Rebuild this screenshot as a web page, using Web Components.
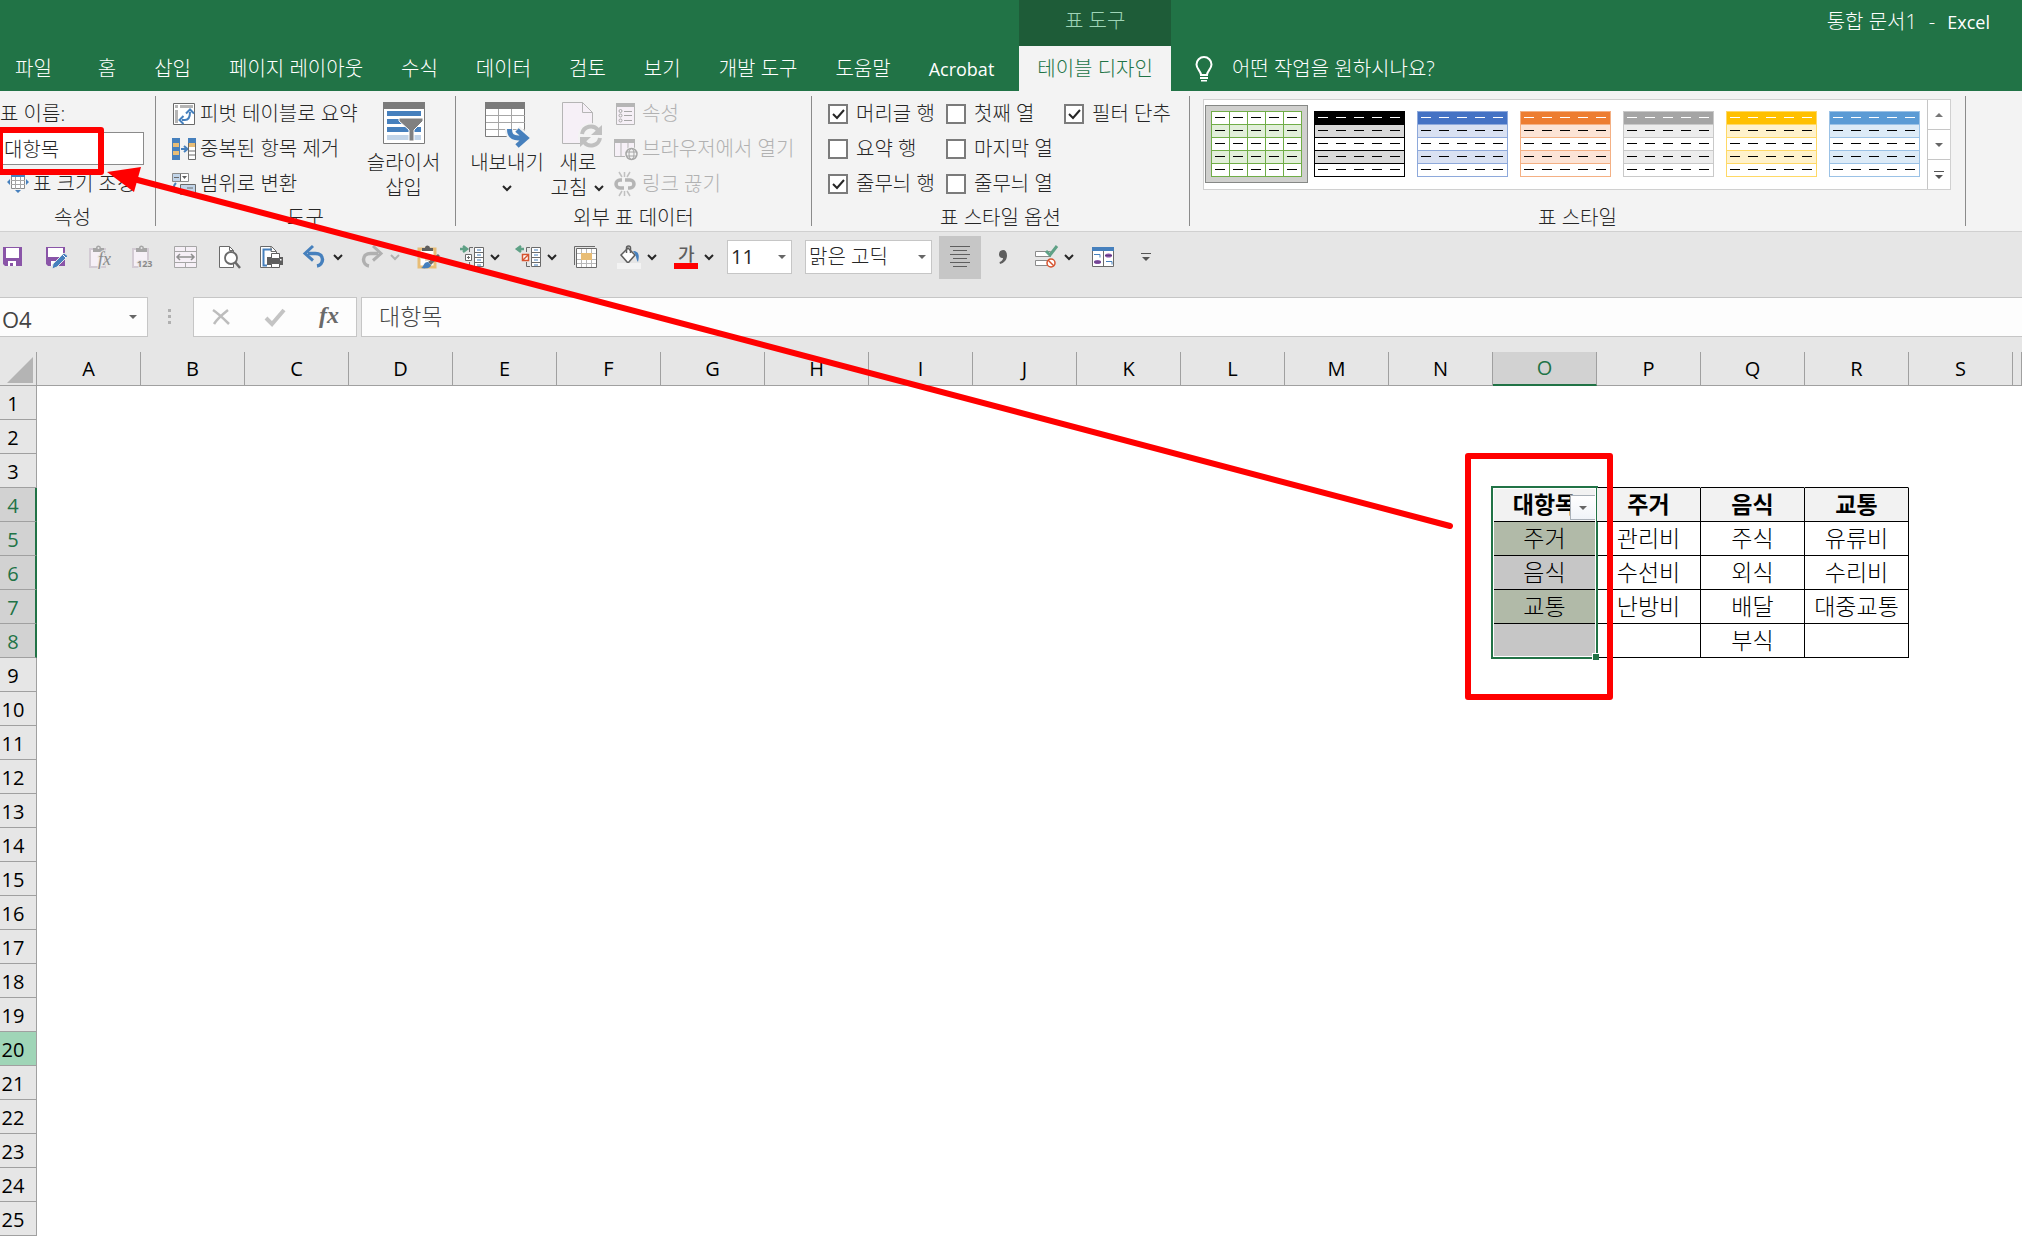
<!DOCTYPE html>
<html lang="ko">
<head>
<meta charset="utf-8">
<title>통합 문서1 - Excel</title>
<style>
  body { margin: 0; background: #fff; overflow: hidden; }
</style>
</head>
<body>
<excel-window></excel-window>

<script>
const FONT = '"Open Sans", "Noto Sans CJK KR", sans-serif';
const BASE = `
  *, *::before, *::after { box-sizing: border-box; }
  button, input, select { font: inherit; color: inherit; margin: 0; padding: 0; border: 0; background: none; border-radius: 0; outline: 0; }
  a { color: inherit; text-decoration: none; }
`;
function define(name, render) {
  customElements.define(name, class extends HTMLElement {
    constructor() { super(); this.attachShadow({ mode: 'open' }); }
    connectedCallback() {
      const t = document.createElement('template');
      t.innerHTML = render(this);
      this.shadowRoot.replaceChildren(t.content.cloneNode(true));
    }
  });
}

/* ---------- icons: [width, height, drawing] ---------- */
const clip = `<path d="M3 4h15v18H3z" fill="#f6f0f7" stroke="#d3cbd4" stroke-width="2"/><path d="M6 3h3a2.500 2.500 0 0 1 5 0h3v4H6z" fill="#a6a6a6"/><circle cx="11.500" cy="3" r="1" fill="#e6e6e6"/>`;
const ICONS = {
  chevron: [12, 8, `<path d="M2 2l4 4 4-4" fill="none" stroke="#262626" stroke-width="2"/>`],
  chevronOff: [12, 8, `<path d="M2 2l4 4 4-4" fill="none" stroke="#b1b1b1" stroke-width="2"/>`],
  down: [8, 4, `<path d="M0 0h8L4 4z" fill="#666"/>`],
  up: [8, 4, `<path d="M0 4h8L4 0z" fill="#777"/>`],
  more: [10, 8, `<path d="M0 0h10v1H0z M1 4h8L5 8z" fill="#555"/>`],
  bulb: [18, 26, `<path d="M6 19c0-4-4.500-6-4.500-10.500a7.500 7.500 0 0 1 15 0C16.500 13 12 15 12 19z" fill="none" stroke="#fff" stroke-width="2"/><path d="M5 21h8v2H5zM6 24h6v1.500H6z" fill="#fff"/>`],
  save: [25, 24, `<path d="M2 2h19v19H4l-2-2z" fill="#8a55a8"/><path d="M5 3h13v10H5z" fill="#fff"/><path d="M7 16h8v5H7z" fill="#fff"/><path d="M9 18h3v3H9z" fill="#8a55a8"/>`],
  saveEdit: [25, 24, `<path d="M2 2h19v19H4l-2-2z" fill="#8a55a8"/><path d="M4 3h15v9H4z" fill="#fff"/><path d="M7 16h5v5H7z" fill="#fff"/><path d="M20 8l4 3-11 11-5 2 1-5z" fill="#4680bd" stroke="#e6e6e6"/><path d="M19 10l3 3" stroke="#fff"/>`],
  pasteFx: [25, 24, `${clip}<text x="11" y="20" font-family="Liberation Serif" font-style="italic" font-weight="400" font-size="18" fill="#8b8b8b" stroke="#e6e6e6" stroke-width="2" paint-order="stroke">fx</text>`],
  pasteNum: [25, 24, `${clip}<text x="7" y="22" font-family="Open Sans" font-weight="700" font-size="9" fill="#8b8b8b" stroke="#e6e6e6" stroke-width="2" paint-order="stroke">123</text>`],
  merge: [25, 24, `<path d="M1.500 1.500h22v21h-22zM1.500 6.500h22M1.500 17.500h22M12.500 1.500v5M12.500 17.500v5" fill="#f6f0f7" stroke="#a6a6a6"/><path d="M4 12h17M7 9l-3 3 3 3M18 9l3 3-3 3" fill="none" stroke="#909090" stroke-width="1.500"/>`],
  preview: [25, 24, `<path d="M3.500 1.500h10l4 4v17h-14z" fill="#fff" stroke="#6a6a6a"/><path d="M13.500 1.500v4h4" fill="none" stroke="#6a6a6a"/><circle cx="15" cy="13" r="6" fill="#fff" stroke="#6a6a6a" stroke-width="1.800"/><path d="M19 17l5 6" stroke="#6a6a6a" stroke-width="2.500"/>`],
  print: [25, 24, `<path d="M1.500 1.500h11l5 5v16h-16z" fill="#fff" stroke="#6a6a6a"/><path d="M13 4.500H4.500v16H8" fill="none" stroke="#4680bd" stroke-width="2"/><path d="M12 1.500v5h5" fill="none" stroke="#6a6a6a"/><path d="M8 12h16v8H8z" fill="#5e5e5e"/><path d="M12.500 8.500h8v5h-8zM12.500 18.500h8v4h-8z" fill="#fff" stroke="#5e5e5e"/><path d="M21 14h1.500v1.500H21z" fill="#fff"/>`],
  undo: [24, 24, `<path d="M5 8.500h7.500c4 0 7 2.500 7 6s-2.500 6-5.500 6.500" fill="none" stroke="#4680bd" stroke-width="3.500"/><path d="M10 1L2 8.500l8 7" fill="none" stroke="#4680bd" stroke-width="3"/>`],
  redo: [24, 24, `<path d="M18 8.500h-7.500c-4 0-7 2.500-7 6s2.500 6 5.500 6.500" fill="none" stroke="#b0b0b0" stroke-width="3.500"/><path d="M13 1l8 7.500-8 7" fill="none" stroke="#b0b0b0" stroke-width="3"/>`],
  brush: [25, 24, `<path d="M3 4h16v18H3z" fill="#fff" stroke="#e8bd76" stroke-width="3"/><path d="M6 6V3h3a2.500 2.500 0 0 1 5 0h3v3z" fill="#5e5e5e"/><path d="M5 9h3v2h3V9h3v2h2v3h-3v2H9v-2H5z" fill="#e6d9c3"/><path d="M22 9l2 2-9 9-3-3z" fill="#6a6a6a"/><path d="M5 23c3-1 2-6 7-6l3 3c0 3-5 4-10 3z" fill="#4680bd"/>`],
  insertRow: [25, 24, `<path d="M0 4h6M3 1l4 3-4 3" fill="none" stroke="#5fa186" stroke-width="2.500"/><path d="M13 2.500H9.500V7M9.500 17v4.500H13" fill="none" stroke="#6a6a6a"/><path d="M5.500 9.500h6v6h-6z" fill="#fff" stroke="#6a6a6a"/><path d="M7 12.500h3M8.500 11v3" stroke="#6a6a6a"/><path d="M14.500 2.500h9v19h-9zM14.500 7.500h9M14.500 12.500h9M14.500 17.500h9" fill="#fff" stroke="#6a6a6a"/><path d="M17 5h4M17 10h4M17 15h4M17 20h4" stroke="#4680bd"/>`],
  deleteRow: [25, 24, `<path d="M7 4H1M4 1L0 4l4 3" fill="none" stroke="#5fa186" stroke-width="2.500"/><path d="M13 2.500H9.500V7M9.500 17v4.500H13" fill="none" stroke="#6a6a6a"/><path d="M5.500 9.500h6v6h-6z" fill="#fff" stroke="#d6532f" stroke-width="1.500"/><path d="M6 15l5-5" stroke="#d6532f" stroke-width="1.500"/><path d="M14.500 2.500h9v19h-9zM14.500 7.500h9M14.500 12.500h9M14.500 17.500h9" fill="#fff" stroke="#6a6a6a"/><path d="M17 5h4M17 10h4M17 15h4M17 20h4" stroke="#4680bd"/>`],
  pivotSel: [25, 24, `<path d="M1.500 20V1.500H22" fill="none" stroke="#6a6a6a"/><path d="M3.500 3.500h20v19h-20z" fill="#fff" stroke="#6a6a6a"/><path d="M4 8.500h19M4 14.500h19M4 18.500h19M8.500 4v18M18.500 4v18M13.500 4v18" stroke="#b8b8b8"/><path d="M8 8h11v7H8z" fill="#e8bd76"/>`],
  fill: [25, 24, `<path d="M4 10l7-7 7 7-7 8z" fill="#fff" stroke="#5e5e5e" stroke-width="1.500"/><path d="M9.500 8V3a2 2 0 0 1 4 0v5" fill="none" stroke="#5e5e5e" stroke-width="1.500"/><path d="M16 6c5 0 7 3 5 11-2-2-1-6-5-11z" fill="#4680bd"/><path d="M0 18h24v6H0z" fill="#f3f3f3"/>`],
  fontColor: [25, 24, `<text x="4" y="16" font-family="Noto Sans CJK KR" font-weight="500" font-size="18" fill="#5e5e5e">가</text><path d="M0 18h24v6H0z" fill="#f00"/>`],
  center: [20, 24, `<path d="M0 1.500h20M3 5.500h14M0 9.500h20M3 13.500h14M0 17.500h20M3 21.500h14" stroke="#5e5e5e"/>`],
  comma: [10, 14, `<path d="M5 0a4.500 4.500 0 0 0-4 4.500C1 7 3 8.500 5 8c0 2-1.500 3.500-3.500 4L2 14c4-1 7-4 7-8.500C9 2 7.500 0 5 0z" fill="#5e5e5e"/>`],
  validate: [25, 24, `<path d="M1.500 6.500h15v5h-15zM1.500 15.500h13v5h-13z" fill="#fff" stroke="#8b8b8b"/><path d="M12 6l4 4 7-9" fill="none" stroke="#5fa186" stroke-width="3"/><circle cx="17" cy="18" r="4" fill="#fff" stroke="#d6532f" stroke-width="1.500"/><path d="M14 15l6 6" stroke="#d6532f" stroke-width="1.500"/>`],
  compare: [25, 24, `<path d="M2.500 4h21v17.500h-21z" fill="#fff" stroke="#6a6a6a"/><path d="M2 2h22v4H2z" fill="#4680bd"/><path d="M13.500 6v15" stroke="#6a6a6a"/><path d="M4 9.500h6v3M16 16.500h6v3" fill="none" stroke="#4680bd"/><ellipse cx="18.500" cy="10.500" rx="3.500" ry="2" fill="#8a55a8"/><ellipse cx="7.500" cy="17" rx="3.500" ry="2" fill="#8a55a8"/><path d="M15 10.500h7M4 17h7" stroke="#5d3a80"/>`],
  resize: [22, 20, `<path d="M4.500 1.500h13v13h-13z" fill="#fff" stroke="#8b8b8b"/><path d="M4 6.500h14M4 10.500h14M8.500 2v13M13.500 2v13" stroke="#a6a6a6"/><path d="M4 0h14v3H4z" fill="#4680bd"/><path d="M3 5v6L0 8zM19 5v6l3-3zM8 16h6l-3 3z" fill="#4680bd"/>`],
  pivot: [24, 24, `<path d="M1.500 1.500h21v21h-21z" fill="#fff" stroke="#6a6a6a"/><path d="M3 3h3v3H3zM8 3h13v3H8zM3 8h3v13H3z" fill="#b5b5b5"/><path d="M10 18h3c4 0 5-3 5-8" fill="none" stroke="#4680bd" stroke-width="2"/><path d="M11.500 14l-4 4 4 4M14 11.500l4-4 4 4" fill="none" stroke="#4680bd" stroke-width="2"/>`],
  dedupe: [24, 24, `<path d="M0 1h8v22H0z" fill="#4680bd"/><path d="M1 6h6v4H1zM1 14h6v4H1z" fill="#e8bd76"/><path d="M9 12h6M12 9l3.500 3L12 15" fill="none" stroke="#4680bd" stroke-width="2"/><path d="M16.500 1.500h7v21h-7zM16.500 14h7M16.500 18h7" fill="#fff" stroke="#6a6a6a"/><path d="M16 1h8v5h-8z" fill="#4680bd"/><path d="M17 6h6v4h-6z" fill="#e8bd76"/>`],
  toRange: [24, 24, `<path d="M.5 1.500h16v8H.5z" fill="#fff" stroke="#8b8b8b"/><path d="M1 2h8v7H1z" fill="#c1d4e8"/><path d="M2 5.500h5M8.500 2v7" stroke="#6a6a6a"/><path d="M10 4h5l-2.500 3z" fill="#5e5e5e"/><path d="M8.500 12.500h15v10h-15z" fill="#c1d4e8" stroke="#6a6a6a"/><path d="M15 16h6" stroke="#6a6a6a"/><path d="M4 11c-4 4-2 8 5 9" fill="none" stroke="#4680bd" stroke-width="2"/>`],
  slicer: [42, 44, `<path d="M.5.500h41v41H.5z" fill="#fff" stroke="#7b7b7b"/><path d="M0 0h42v7H0z" fill="#7b7b7b"/><path d="M4 9h34v5H4zM4 17h34v5H4zM4 25h34v5H4z" fill="#4680bd"/><path d="M4 33h34v5H4z" fill="#c1d4e8"/><path d="M16 16h24v3l-9 9v11h-5V28l-10-9z" fill="#808080" stroke="#fff"/>`],
  exportTable: [44, 46, `<path d="M.5.500h39v34H.5z" fill="#fff" stroke="#7b7b7b"/><path d="M1 13.500h39M1 20.500h39M1 27.500h39M13.500 6v28M26.500 6v28" stroke="#a6a6a6"/><path d="M0 0h40v7H0z" fill="#7b7b7b"/><path d="M24 27c0 6 2 9 9 9h7M32 27l10 9-10 8" fill="none" stroke="#f3f3f3" stroke-width="8"/><path d="M24.500 27c0 6 2 9 9 9h7M32 28l9 8-9 8" fill="none" stroke="#4680bd" stroke-width="5"/>`],
  refresh: [50, 46, `<g transform="translate(9 0)"><path d="M.5.500h20l10 10v31H.5z" fill="#f6f0f7" stroke="#b5b5b5"/><path d="M20.500.500v10h10" fill="none" stroke="#b5b5b5"/><circle cx="29" cy="34" r="13" fill="#f3f3f3"/><path d="M20 32a9 9 0 0 1 16-4M38 36a9 9 0 0 1-16 4" fill="none" stroke="#c0c0c0" stroke-width="4"/><path d="M40 23v10H29zM18 45V35h11z" fill="#c0c0c0"/></g>`],
  props: [24, 24, `<path d="M2.500 1.500h18v21h-18z" fill="#f6f0f7" stroke="#b5b5b5"/><path d="M2 1h19v4H2z" fill="#b5b5b5"/><path d="M10 9.500h8M10 13.500h8M10 18.500h8" stroke="#a6a6a6"/><circle cx="6.500" cy="9" r="1.500" fill="none" stroke="#a6a6a6"/><circle cx="6.500" cy="13.500" r="1.500" fill="none" stroke="#a6a6a6"/><circle cx="6.500" cy="18.500" r="1.500" fill="none" stroke="#a6a6a6"/>`],
  browser: [24, 24, `<path d="M.5 2.500h20v17H.5zM7 3v16M14 3v16" fill="#f6f0f7" stroke="#b5b5b5"/><path d="M0 2h21v4H0z" fill="#b5b5b5"/><circle cx="17.500" cy="17" r="7" fill="#f3f3f3"/><circle cx="17.500" cy="17" r="5.500" fill="none" stroke="#a6a6a6" stroke-width="1.500"/><ellipse cx="17.500" cy="17" rx="2.500" ry="5.500" fill="none" stroke="#a6a6a6"/><path d="M12 15h11M12 19h11" stroke="#a6a6a6"/>`],
  unlink: [24, 24, `<path d="M8 8H6a4 4 0 0 0 0 8h4M11 8h5a4 4 0 0 1 0 8h-2" fill="none" stroke="#b5b5b5" stroke-width="3.500"/><path d="M5 0l3 5M10.500 0v5M16 0l-3 5M5 24l3-5M10.500 24v-5M16 24l-3-5" stroke="#c0c0c0" stroke-width="1.500"/><path d="M8 6h3v4H8zM11 14h3v4h-3z" fill="#f3f3f3"/>`],
  cancel: [18, 16, `<path d="M1 1c6 4 11 9 16 14M16 1C11 5 5 10 2 15" fill="none" stroke="#bdbdbd" stroke-width="2.500"/>`],
  enter: [20, 16, `<path d="M1 9l6 6L19 1" fill="none" stroke="#c4c4c4" stroke-width="4"/>`],
  fx: [22, 26, `<text x="1" y="19" font-family="Liberation Serif" font-style="italic" font-weight="700" font-size="24" fill="#6a6a6a">fx</text>`],
  dots: [4, 16, `<path d="M0 0h3v3H0zM0 6h3v3H0zM0 12h3v3H0z" fill="#b0b0b0"/>`],
  tick: [20, 20, `<path d="M5 10l4 4 7-8" fill="none" stroke="#262626" stroke-width="2"/>`],
  corner: [26, 26, `<path d="M26 0v26H0z" fill="#b4b4b4"/>`],
};
define('xl-icon', el => {
  const [w, h, body] = ICONS[el.getAttribute('name')];
  return `<style>:host{display:block;flex:none;width:${w}px;height:${h}px}svg{display:block;overflow:visible}</style>
    <svg width="${w}" height="${h}" viewBox="0 0 ${w} ${h}" aria-hidden="true">${body}</svg>`;
});

/* ---------- title bar and tabs ---------- */
define('title-bar', () => `<style>${BASE}
  :host{display:flex;height:91px;background:#217346;color:#fff;line-height:28px}
  nav{display:flex;align-items:flex-end;flex:none}
  a{display:block;height:45px;padding:9px 19px 0;white-space:nowrap}
  a.file{padding:9px 27px 0 15px}
  .latin{font-size:18px;font-weight:400}
  a.latin{padding-right:25px}
  .context{display:flex;flex-direction:column;text-align:center}
  .context span{height:46px;background:#1e5c38;color:#9fd5b7;padding-top:7px}
  .context a{background:#f3f3f3;color:#217346;padding:9px 18px 0}
  .ask{display:flex;align-items:center;gap:19px;height:45px;margin:0 0 0 24px;white-space:nowrap}
  .title{display:flex;gap:12px;margin-left:auto;padding:8px 32px 0 0;white-space:nowrap}
</style>
<nav>
  ${['파일','홈','삽입','페이지 레이아웃','수식','데이터','검토','보기','개발 도구','도움말'].map((t, i) => `<a href="#"${i ? '' : ' class="file"'}>${t}</a>`).join('')}
  <a href="#" class="latin">Acrobat</a>
  <div class="context"><span>표 도구</span><a href="#">테이블 디자인</a></div>
  <button class="ask"><xl-icon name="bulb"></xl-icon>어떤 작업을 원하시나요?</button>
</nav>
<div class="title"><span>통합 문서1</span><span>-</span><span class="latin">Excel</span></div>`);

/* ---------- ribbon parts ---------- */
define('ribbon-group', el => `<style>${BASE}
  :host{display:flex;flex:none;flex-direction:column;justify-content:space-between;padding-top:5px;height:140px}
  .body{display:flex;height:105px;padding-left:var(--lead,0)}
  .label{line-height:26px;text-align:center;padding-right:var(--trail,0)}
</style><div class="body"><slot></slot></div><div class="label">${el.getAttribute('label')}</div>`);

define('large-button', el => `<style>${BASE}
  :host{display:block}
  button{display:flex;flex-direction:column;align-items:center;width:100%;padding-top:6px;line-height:25px;white-space:nowrap}
  .icon{height:48px}
  .line{display:flex;align-items:center;gap:6px;height:25px}
</style><button><span class="icon"><xl-icon name="${el.getAttribute('icon')}"></xl-icon></span><slot></slot>
<span class="line">${el.getAttribute('second') || ''}${el.hasAttribute('menu') ? '<xl-icon name="chevron"></xl-icon>' : ''}</span></button>`);

define('small-button', el => `<style>${BASE}
  :host{display:block}
  button{display:flex;align-items:center;gap:4px;height:35px;white-space:nowrap}
  button:disabled{color:#b1b1b1}
</style><button${el.hasAttribute('disabled') ? ' disabled' : ''}><xl-icon name="${el.getAttribute('icon')}"></xl-icon><slot></slot></button>`);

define('check-option', el => `<style>${BASE}
  :host{display:block}
  label{display:flex;align-items:center;gap:8px;height:35px;white-space:nowrap}
  .box{display:grid}
  .box>*{grid-area:1/1}
  input{appearance:none;width:20px;height:20px;border:2px solid #7b7b7b;background:#fff}
  xl-icon{visibility:hidden;pointer-events:none}
  input:checked+xl-icon{visibility:visible}
</style><label><span class="box"><input type="checkbox"${el.hasAttribute('checked') ? ' checked' : ''}><xl-icon name="tick"></xl-icon></span><span>${el.getAttribute('label')}</span></label>`);

define('style-thumb', el => {
  const [head, line, band, dash] = el.getAttribute('colors').split(' ');
  const grid = el.hasAttribute('grid');
  let s = `<rect x=".5" y=".5" width="90" height="65" fill="#fff" stroke="${line}"/>`;
  s += `<path d="M1 1h89v12H1z" fill="${head}"/><path d="M1 14h89v12H1zM1 40h89v12H1z" fill="${band}"/>`;
  s += `<path d="M0 13.500h91M0 26.500h91M0 39.500h91M0 52.500h91" stroke="${line}"/>`;
  if (grid) s += `<path d="M18.500 0v66M36.500 0v66M54.500 0v66M72.500 0v66" stroke="${line}"/>`;
  for (let r = 0; r < 5; r++) for (let c = 0; c < 5; c++)
    s += `<path d="M${4 + c * 18} ${6.5 + r * 13}h10" stroke="${r ? '#000' : dash}"/>`;
  return `<style>${BASE}:host{display:block}button{display:block;width:103px;height:78px;padding:5px;border:1px solid transparent}
    :host([selected]) button{background:#d0d0ce;border-color:#868886}svg{display:block}</style>
    <button aria-label="${el.getAttribute('name')}"><svg width="91" height="66">${s}</svg></button>`;
});

define('table-ribbon', () => `<style>${BASE}
  :host{display:flex;height:141px;background:#f3f3f3;border-bottom:1px solid #d0d0d0;color:#262626;line-height:28px}
  .sep{flex:none;width:1px;margin:5px 0;background:#8b8b8b}
  .g1{width:155px;--trail:10px}
  .g2{width:299px;--lead:16px}
  .g3{width:355px;--lead:11px}
  .g4{width:377px;--lead:16px}
  .g5{width:775px;--lead:13px}
  .g1 label{display:block;height:35px;line-height:35px}
  .g1 input{display:block;width:144px;height:33px;margin:1px 0;padding-left:4px;background:#fff;border:1px solid #8b8b8b;border-left:0}
  .g1 small-button{padding-left:7px}
  .slicer{width:80px;margin-left:6px}
  .export{width:80px}
  .refresh{width:62px;margin-right:5px}
  .options{display:grid;grid-template-columns:repeat(3,118px);grid-auto-rows:35px}
  .gallery{display:flex;height:91px;margin-top:3px;background:#fff;border:1px solid #d0d0d0}
  .thumbs{display:flex;width:723px;padding:5px 1px}
  .scroll{display:flex;flex-direction:column;width:23px;border-left:1px solid #c6c6c6}
  .scroll button{flex:1;display:grid;place-items:center}
  .scroll button+button{border-top:1px solid #c6c6c6}
</style>
<ribbon-group class="g1" label="속성"><div>
  <label for="tname">표 이름:</label><input id="tname" value="대항목">
  <small-button icon="resize">표 크기 조정</small-button></div></ribbon-group>
<span class="sep"></span>
<ribbon-group class="g2" label="도구"><div>
  <small-button icon="pivot">피벗 테이블로 요약</small-button>
  <small-button icon="dedupe">중복된 항목 제거</small-button>
  <small-button icon="toRange">범위로 변환</small-button></div>
  <large-button class="slicer" icon="slicer" second="삽입">슬라이서</large-button></ribbon-group>
<span class="sep"></span>
<ribbon-group class="g3" label="외부 표 데이터">
  <large-button class="export" icon="exportTable" menu>내보내기</large-button>
  <large-button class="refresh" icon="refresh" second="고침" menu>새로</large-button>
  <div><small-button icon="props" disabled>속성</small-button>
  <small-button icon="browser" disabled>브라우저에서 열기</small-button>
  <small-button icon="unlink" disabled>링크 끊기</small-button></div></ribbon-group>
<span class="sep"></span>
<ribbon-group class="g4" label="표 스타일 옵션"><div class="options">
  <check-option checked label="머리글 행"></check-option><check-option label="첫째 열"></check-option><check-option checked label="필터 단추"></check-option>
  <check-option label="요약 행"></check-option><check-option label="마지막 열"></check-option><span></span>
  <check-option checked label="줄무늬 행"></check-option><check-option label="줄무늬 열"></check-option></div></ribbon-group>
<span class="sep"></span>
<ribbon-group class="g5" label="표 스타일"><div class="gallery"><div class="thumbs">
  <style-thumb selected grid name="녹색" colors="#ffffff #70ad47 #e2efda #000000"></style-thumb>
  <style-thumb name="검정" colors="#000000 #000000 #d9d9d9 #ffffff"></style-thumb>
  <style-thumb name="파랑" colors="#4472c4 #8ea9db #d9e1f2 #ffffff"></style-thumb>
  <style-thumb name="주황" colors="#ed7d31 #f4b084 #fce4d6 #ffffff"></style-thumb>
  <style-thumb name="회색" colors="#a5a5a5 #c9c9c9 #ededed #ffffff"></style-thumb>
  <style-thumb name="황금색" colors="#ffc000 #ffd966 #fff2cc #ffffff"></style-thumb>
  <style-thumb name="하늘색" colors="#5b9bd5 #9bc2e6 #ddebf7 #ffffff"></style-thumb></div>
  <div class="scroll"><button aria-label="위로"><xl-icon name="up"></xl-icon></button><button aria-label="아래로"><xl-icon name="down"></xl-icon></button><button aria-label="자세히"><xl-icon name="more"></xl-icon></button></div>
</div></ribbon-group>
<span class="sep"></span>`);

/* ---------- quick access toolbar ---------- */
define('quick-button', el => `<style>${BASE}
  :host{display:block;flex:none}
  button{display:grid;place-items:center;width:43px;height:43px}
  :host([pressed]) button{background:#c6c6c6;width:42px}
</style><button aria-label="${el.getAttribute('icon')}"><xl-icon name="${el.getAttribute('icon')}"></xl-icon></button>`);

define('split-button', el => `<style>${BASE}
  :host{display:flex;flex:none;width:57px;height:43px;padding-left:10px}
  button{display:flex;align-items:center}
  button+button{padding-left:4px}
  .main{width:25px}
</style><button class="main" aria-label="${el.getAttribute('icon')}"><xl-icon name="${el.getAttribute('icon')}"></xl-icon></button>
<button aria-label="${el.getAttribute('icon')} 메뉴"><xl-icon name="${el.hasAttribute('off') ? 'chevronOff' : 'chevron'}"></xl-icon></button>`);

define('combo-box', el => `<style>${BASE}
  :host{display:grid;flex:none;height:34px}
  :host>*{grid-area:1/1}
  select,xl-icon{grid-area:1/1}
  select{appearance:none;width:100%;height:34px;padding:0 3px;background:#fff;border:1px solid #c6c6c6;color:#262626}
  xl-icon{place-self:center end;margin-right:6px;pointer-events:none}
</style><select aria-label="${el.getAttribute('label')}"><option>${el.getAttribute('value')}</option></select><xl-icon name="down"></xl-icon>`);

define('quick-bar', () => `<style>${BASE}
  :host{display:flex;align-items:center;height:50px;margin-left:-8px}
  .size{width:65px;margin:0 13px 0 6px;font-weight:400}
  .face{width:127px;margin-right:7px}
</style>
${['save','saveEdit','pasteFx','pasteNum','merge','preview','print'].map(n => `<quick-button icon="${n}"></quick-button>`).join('')}
<split-button icon="undo"></split-button><split-button icon="redo" off></split-button>
<quick-button icon="brush"></quick-button>
<split-button icon="insertRow"></split-button><split-button icon="deleteRow"></split-button>
<quick-button icon="pivotSel"></quick-button>
<split-button icon="fill"></split-button><split-button icon="fontColor"></split-button>
<combo-box class="size" label="글꼴 크기" value="11"></combo-box>
<combo-box class="face" label="글꼴" value="맑은 고딕"></combo-box>
<quick-button icon="center" pressed></quick-button><quick-button icon="comma"></quick-button>
<split-button icon="validate"></split-button><quick-button icon="compare"></quick-button>
<quick-button icon="more"></quick-button>`);

/* ---------- formula bar ---------- */
define('formula-bar', () => `<style>${BASE}
  :host{display:flex;height:40px;margin-top:15px;color:#444}
  .name{display:flex;align-items:center;width:148px;padding-right:10px;background:#fdfdfd;border:1px solid #c6c6c6;border-left:0}
  .name input{flex:1;min-width:0;padding:4px 0 0 2px;font-size:22px;font-weight:400;line-height:32px}
  .dots{align-self:center;margin:0 21px 0 20px}
  .tools{display:grid;grid-template-columns:repeat(3,1fr);width:164px;background:#fdfdfd;border:1px solid #c6c6c6}
  .tools button{display:grid;place-items:center}
  .value{flex:1;margin-left:4px;padding:0 0 2px 17px;background:#fdfdfd;border:1px solid #c6c6c6;border-right:0;font-size:23px}
</style>
<div class="name"><input aria-label="이름 상자" value="O4"><button aria-label="이름 목록"><xl-icon name="down"></xl-icon></button></div>
<xl-icon class="dots" name="dots"></xl-icon>
<div class="tools"><button aria-label="취소"><xl-icon name="cancel"></xl-icon></button><button aria-label="입력"><xl-icon name="enter"></xl-icon></button><button aria-label="함수 삽입"><xl-icon name="fx"></xl-icon></button></div>
<input class="value" aria-label="수식 입력줄" value="대항목">`);

/* ---------- worksheet ---------- */
const DATA = {
  4: ['대항목', '주거', '음식', '교통'],
  5: ['주거', '관리비', '주식', '유류비'],
  6: ['음식', '수선비', '외식', '수리비'],
  7: ['교통', '난방비', '배달', '대중교통'],
  8: ['', '', '부식', ''],
};
define('sheet-grid', () => {
  const cols = 'ABCDEFGHIJKLMNOPQRS'.split('');
  const cell = (r, c) => {
    const i = c - 14, inTable = i >= 0 && i < 4;
    if (r === 3 && inTable) return '<td class="edge"></td>';
    if (!inTable || !DATA[r]) return '<td></td>';
    const cls = ['d', r === 4 ? 'h' : '', i === 0 && r > 4 ? (r % 2 ? 'odd' : 'even') : ''].join(' ').trim();
    const extra = r === 4 && i === 0 ? '<div class="sel"><i></i></div><button class="filter" aria-label="필터"><xl-icon name="down"></xl-icon></button>' : '';
    return `<td class="${cls}">${DATA[r][i]}${extra}</td>`;
  };
  let rows = '';
  for (let r = 1; r <= 25; r++)
    rows += `<tr><th scope="row" class="${r >= 4 && r <= 8 ? 'on' : r === 20 ? 'mark' : ''}">${r}</th>${cols.map((_, c) => cell(r, c)).join('')}<td></td></tr>`;
  return `<style>${BASE}
  :host{display:block;padding-top:15px;background:linear-gradient(#e6e6e6 49px,#fff 49px);overflow:hidden}
  table{width:100%;table-layout:fixed;border-collapse:separate;border-spacing:0;line-height:28px}
  col{width:104px} col.head{width:37px} col.rest{width:auto}
  th,td{height:34px;padding:0;text-align:center;font-weight:400;white-space:nowrap;border:solid transparent;border-width:0 1px 1px 0}
  thead th{background:#e6e6e6;color:#000;border-color:#a0a0a0}
  thead th:first-child xl-icon{margin:2px 0 0 7px}
  thead th.on{background:#d2d2d2;color:#217346;border-bottom:2px solid #217346}
  tbody th{background:#e6e6e6;border-color:#a0a0a0;padding:2px 10px 0 0;color:#000}
  tbody th.on{background:#d2d2d2;color:#217346;border-right:2px solid #217346;padding-right:9px}
  tbody th.mark{background:#9fd5b7}
  td{font-size:23px;font-weight:300;padding-bottom:2px;color:#000}
  td.edge{border-bottom-color:#000}
  td.d{border-color:#000}
  td.h{font-weight:700;background:#f2f2f2;position:relative}
  td.odd{background:#b1baa8} td.even{background:#c6c6c6}
  .sel{position:absolute;left:-2px;right:-2px;top:-2px;height:173px;border:2px solid #217346;box-shadow:inset 0 0 0 1px #fff;pointer-events:none}
  .sel i{position:absolute;right:-3px;bottom:-3px;width:7px;height:7px;background:#217346;border:solid #fff;border-width:1px 0 0 1px}
  .filter{position:absolute;right:1px;bottom:1px;width:25px;height:25px;display:grid;place-items:center;background:linear-gradient(#fff,#f0f3f8);border:1px solid #a9b0b8;border-right:0}
</style>
<table><colgroup><col class="head">${cols.map(() => '<col>').join('')}<col class="rest"></colgroup>
<thead><tr><th><xl-icon name="corner"></xl-icon></th>${cols.map(c => `<th scope="col"${c === 'O' ? ' class="on"' : ''}>${c}</th>`).join('')}<th></th></tr></thead>
<tbody>${rows}</tbody></table>`;
});

/* ---------- red annotations drawn over the window ---------- */
define('red-marks', () => `<style>:host{position:absolute;inset:0;pointer-events:none;overflow:hidden}svg{display:block}</style>
<svg width="100%" height="100%" fill="none" stroke="#f00" stroke-width="6" stroke-linejoin="round" stroke-linecap="round" aria-hidden="true">
<rect x="0" y="130" width="101" height="42"/><rect x="1468" y="456" width="142" height="241"/>
<path d="M130 178L1450 526"/><path d="M107 172l34-5-7 25z" fill="#f00" stroke="none"/></svg>`);

define('excel-window', () => `<style>
  *{box-sizing:border-box}
  :host{display:block;position:relative;background:#e6e6e6;font:300 20px/28px ${FONT};overflow:hidden}
</style>
<title-bar></title-bar><table-ribbon></table-ribbon><quick-bar></quick-bar><formula-bar></formula-bar><sheet-grid></sheet-grid><red-marks></red-marks>`);
</script>
</body>
</html>
